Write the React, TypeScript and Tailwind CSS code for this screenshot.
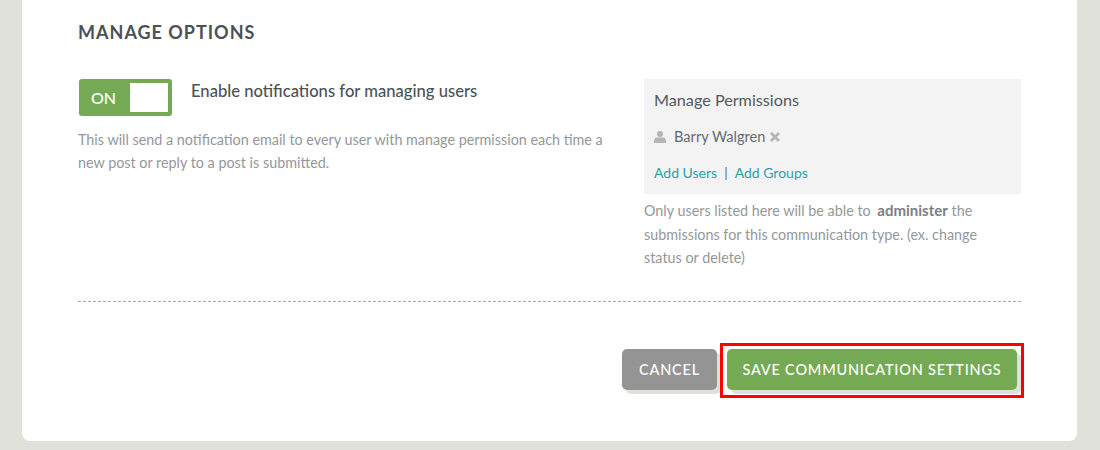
export default function App() {
  return (
    <div className="h-[450px] overflow-hidden bg-[#e0e1db] pl-[22px] pr-[23px] font-['Lato',sans-serif]">
      <div className="h-[441px] rounded-b-lg bg-white pl-[56px] pr-[56px] pt-[20px]">
        <h2 className="text-[18px] leading-[24px] font-bold tracking-[1px] text-[#4b5155]">MANAGE OPTIONS</h2>

        <div className="mt-[35px] flex h-[222px] justify-between">
          <div className="w-[530px]">
            <div className="flex items-start pl-[1px]">
              <div className="flex h-[37px] w-[93px] items-center justify-between rounded-[3px] bg-[#75aa55] pl-[12px] pr-[4px]">
                <span className="text-[16px] font-medium text-white">ON</span>
                <span className="h-[29px] w-[38px] bg-white" />
              </div>
              <span className="ml-[19px] pt-[1px] text-[16.6px] leading-[22px] font-medium text-[#4b5155]">
                Enable notifications for managing users
              </span>
            </div>
            <p className="mt-[12px] text-[14.35px] leading-[23px] text-[#94989a]">
              This will send a notification email to every user with manage permission each time a new post or reply
              to a post is submitted.
            </p>
          </div>

          <div className="w-[377px]">
            <div className="h-[115px] bg-[#f3f3f3] px-[10px] pt-[10px]">
              <div className="text-[16.2px] leading-[22px] text-[#53585b]">Manage Permissions</div>
              <div className="mt-[15px] flex h-[22px] items-center text-[14.6px] text-[#666b6e]">
                <svg viewBox="0 0 12 12" className="h-[12px] w-[12px] fill-[#b5b5b5]">
                  <circle cx="6" cy="3" r="3" />
                  <path d="M0 12V9.6C0 7.6 1.6 6.4 3.4 6.4H8.6C10.4 6.4 12 7.6 12 9.6V12Z" />
                </svg>
                <span className="ml-[8px]">Barry Walgren</span>
                <svg viewBox="0 0 10 10" className="ml-[5px] h-[10px] w-[10px] stroke-[#b5b5b5]" strokeWidth={2.8}>
                  <path d="M1 1L9 9M9 1L1 9" />
                </svg>
              </div>
              <div className="mt-[14px] text-[14px] leading-[22px] text-[#666b6e]">
                <span className="text-[#2b9fa8]">Add Users</span>
                <span className="mx-[7px]">|</span>
                <span className="text-[#2b9fa8]">Add Groups</span>
              </div>
            </div>
            <p className="mt-[5px] pr-[20px] text-[14.35px] leading-[23.5px] text-[#94989a]">
              Only users listed here will be able to{" "}
              <b className="ml-[3px] text-[15px] leading-[20px] font-bold text-[#7b8083]">administer</b> the submissions
              for this communication type. (ex. change status or delete)
            </p>
          </div>
        </div>

        <div className="border-t border-dashed border-[#a9a9a9]" />

        <div className="mt-[47px] flex justify-end gap-[10px] pr-[4px]">
          <button className="h-[41px] w-[95px] rounded-[5px] bg-[#949494] text-[14.5px] font-medium tracking-[0.8px] text-white shadow-[4px_4px_0_#e0e1db]">
            CANCEL
          </button>
          <div className="relative">
            <button className="h-[41px] w-[290px] rounded-[5px] bg-[#75aa55] text-[14.5px] font-medium tracking-[0.8px] text-white shadow-[4px_4px_0_#e0e1db]">
              SAVE COMMUNICATION SETTINGS
            </button>
            <div className="absolute -top-[6px] -left-[7px] h-[55px] w-[304px] border-[3px] border-[#ff0000]" />
          </div>
        </div>
      </div>
    </div>
  )
}
